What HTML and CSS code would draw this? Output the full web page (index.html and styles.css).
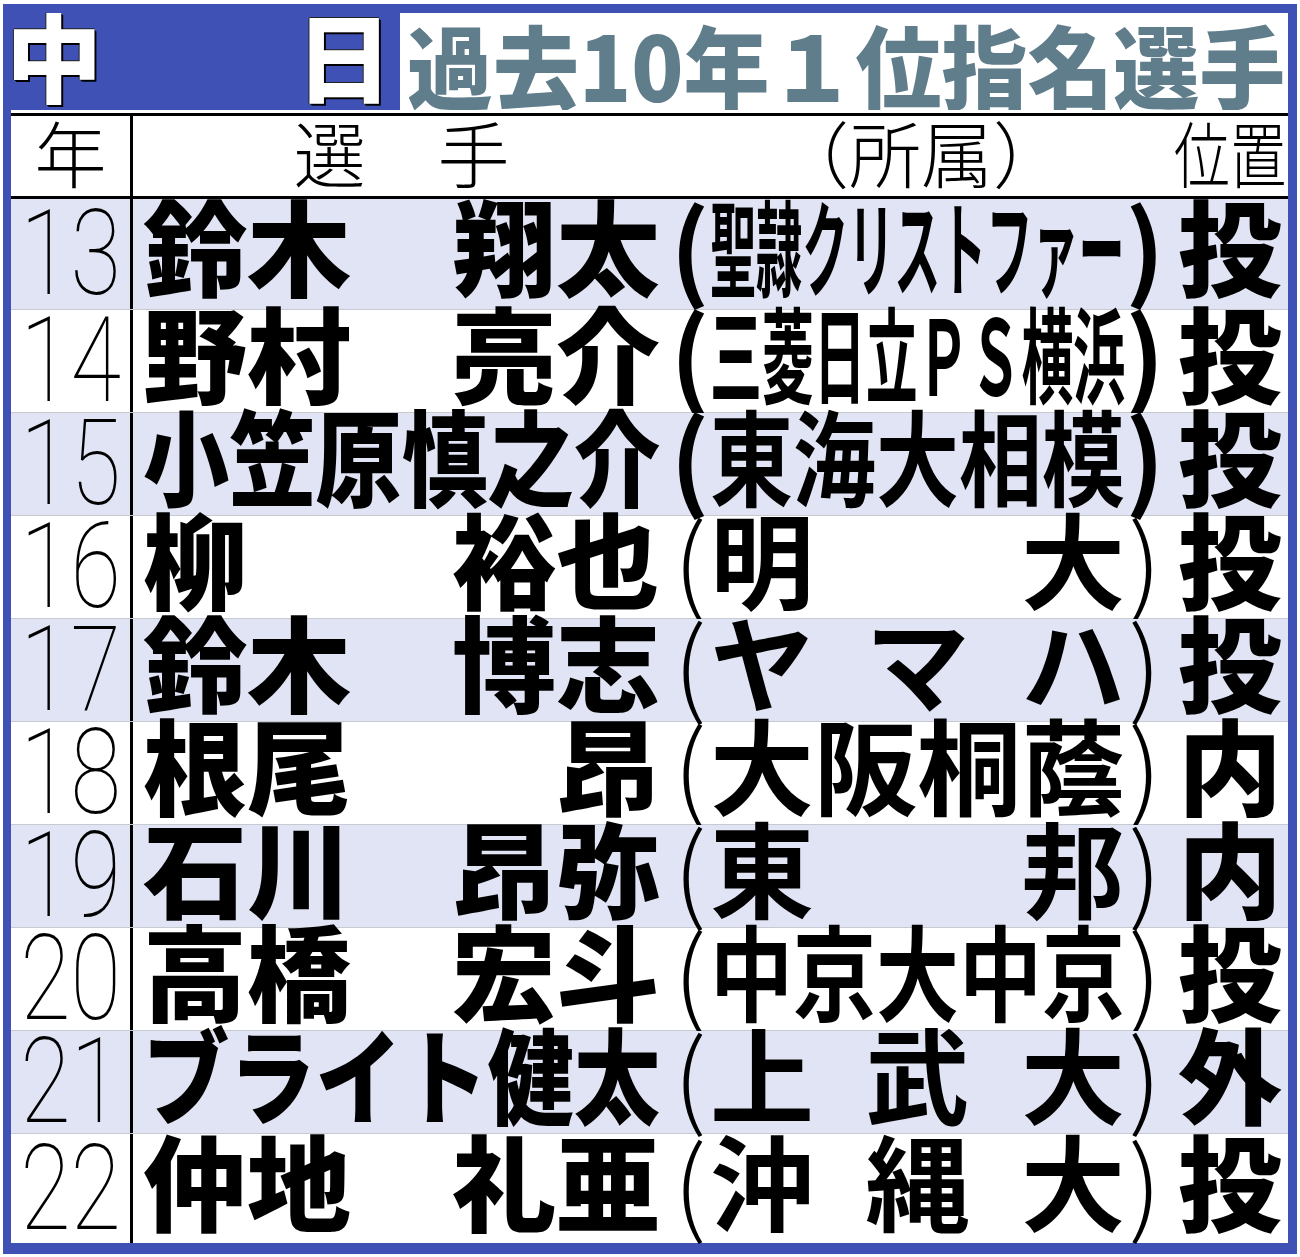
FILE: index.html
```html
<!DOCTYPE html>
<html lang="ja">
<head>
<meta charset="utf-8">
<title>中日 過去10年１位指名選手</title>
<link rel="stylesheet" href="styles.css">
</head>
<body>
<div class="frame">
  <div class="head">
    <div class="team"><span class="team-l">中</span><span>日</span></div>
    <div class="title"><span class="title-text">過去10年１位指名選手</span></div>
  </div>
  <div class="table">
    <div class="hrow">
      <div class="c-year">年</div>
      <div class="c-name">選　手</div>
      <div class="c-aff">（所属）</div>
      <div class="c-pos"><span class="pos-h">位置</span></div>
    </div>
    <div class="rows">
      <div class="row alt">
        <div class="c-year"><span class="num">13</span></div>
        <div class="c-name"><span>鈴木</span><span>翔太</span></div>
        <div class="c-aff"><span class="p bold">(</span><span class="aff-in"><span class="fit fit9">聖隷クリストファー</span></span><span class="p bold">)</span></div>
        <div class="c-pos">投</div>
      </div>
      <div class="row">
        <div class="c-year"><span class="num">14</span></div>
        <div class="c-name"><span>野村</span><span>亮介</span></div>
        <div class="c-aff"><span class="p bold">(</span><span class="aff-in"><span class="fit fit8">三菱日立ＰＳ横浜</span></span><span class="p bold">)</span></div>
        <div class="c-pos">投</div>
      </div>
      <div class="row alt">
        <div class="c-year"><span class="num">15</span></div>
        <div class="c-name"><span class="fit fit6">小笠原慎之介</span></div>
        <div class="c-aff"><span class="p bold">(</span><span class="aff-in"><span class="fit fit5">東海大相模</span></span><span class="p bold">)</span></div>
        <div class="c-pos">投</div>
      </div>
      <div class="row">
        <div class="c-year"><span class="num">16</span></div>
        <div class="c-name"><span>柳</span><span>裕也</span></div>
        <div class="c-aff"><span class="p">(</span><span class="aff-in"><span>明</span><span>大</span></span><span class="p">)</span></div>
        <div class="c-pos">投</div>
      </div>
      <div class="row alt">
        <div class="c-year"><span class="num">17</span></div>
        <div class="c-name"><span>鈴木</span><span>博志</span></div>
        <div class="c-aff"><span class="p">(</span><span class="aff-in"><span>ヤ</span><span>マ</span><span>ハ</span></span><span class="p">)</span></div>
        <div class="c-pos">投</div>
      </div>
      <div class="row">
        <div class="c-year"><span class="num">18</span></div>
        <div class="c-name"><span>根尾</span><span>昂</span></div>
        <div class="c-aff"><span class="p">(</span><span class="aff-in"><span class="fit fit4">大阪桐蔭</span></span><span class="p">)</span></div>
        <div class="c-pos">内</div>
      </div>
      <div class="row alt">
        <div class="c-year"><span class="num">19</span></div>
        <div class="c-name"><span>石川</span><span>昂弥</span></div>
        <div class="c-aff"><span class="p">(</span><span class="aff-in"><span>東</span><span>邦</span></span><span class="p">)</span></div>
        <div class="c-pos">内</div>
      </div>
      <div class="row">
        <div class="c-year"><span class="num">20</span></div>
        <div class="c-name"><span>高橋</span><span>宏斗</span></div>
        <div class="c-aff"><span class="p">(</span><span class="aff-in"><span class="fit fit5">中京大中京</span></span><span class="p">)</span></div>
        <div class="c-pos">投</div>
      </div>
      <div class="row alt">
        <div class="c-year"><span class="num">21</span></div>
        <div class="c-name"><span class="fit fit6">ブライト健太</span></div>
        <div class="c-aff"><span class="p">(</span><span class="aff-in"><span>上</span><span>武</span><span>大</span></span><span class="p">)</span></div>
        <div class="c-pos">外</div>
      </div>
      <div class="row">
        <div class="c-year"><span class="num">22</span></div>
        <div class="c-name"><span>仲地</span><span>礼亜</span></div>
        <div class="c-aff"><span class="p">(</span><span class="aff-in"><span>沖</span><span>縄</span><span>大</span></span><span class="p">)</span></div>
        <div class="c-pos">投</div>
      </div>
    </div>
  </div>
</div>
</body>
</html>
```
FILE: styles.css
```css
body {
  margin: 0;
  background: #fff;
}

.frame {
  margin: 4px 3px 3px 3px;
  width: 1294px;
  height: 1250px;
  box-sizing: border-box;
  border-style: solid;
  border-color: #3f51b5;
  border-width: 9px 9px 11px 8px;
  background: #fff;
  display: flex;
  flex-direction: column;
  font-family: "Noto Sans CJK JP", sans-serif;
}

.head {
  height: 97px;
  display: flex;
  flex: none;
  overflow: hidden;
}

.team {
  width: 389px;
  box-sizing: border-box;
  background: #3f51b5;
  display: flex;
  justify-content: space-between;
  align-items: center;
  padding: 0 8px 16px 0;
  font-size: 96px;
  font-weight: 900;
  line-height: 1;
  color: #fff;
  white-space: nowrap;
  text-shadow: 2px 2px 0 #000, 1px 1px 0 #000, -1px 0 0 #222, 0 -1px 0 #222;
}

.team-l {
  margin-left: -5px;
}

.title {
  flex: 1;
  display: flex;
  align-items: center;
  padding: 2px 0 0 7px;
  overflow: hidden;
  font-size: 90px;
  font-weight: 900;
  line-height: 1;
  color: #607d8b;
}

.title-text {
  display: inline-block;
  white-space: nowrap;
  transform: scaleX(0.955);
  transform-origin: left center;
}

.table {
  margin-top: 3px;
  border-top: 3px solid #000;
  flex: 1;
  display: flex;
  flex-direction: column;
}

.hrow,
.row {
  display: grid;
  grid-template-columns: 122px 537px 502px 116px;
  grid-template-rows: 100%;
  box-sizing: border-box;
  flex: none;
}

.hrow {
  height: 83px;
  border-bottom: 3px solid #000;
  font-size: 72px;
  line-height: 1;
  white-space: nowrap;
}

.hrow > div {
  display: flex;
  align-items: center;
  justify-content: center;
  padding: 0 0 10px 0;
  box-sizing: border-box;
  overflow: hidden;
  font-weight: 300;
}

.c-year {
  border-right: 3px solid #000;
  display: flex;
  align-items: center;
  justify-content: center;
}

.pos-h {
  display: inline-block;
  transform: scaleX(0.78);
}

.rows {
  display: flex;
  flex-direction: column;
}

.row {
  height: 103px;
  border-bottom: 1px solid #c8cad2;
  font-size: 104px;
  line-height: 1;
  white-space: nowrap;
}

.row:first-child {
  height: 111px;
}

.row:last-child {
  height: 109px;
  border-bottom: 0;
}

.row > div {
  box-sizing: border-box;
  padding-bottom: 20px;
}

.row > .c-year {
  padding-bottom: 0;
}

.alt {
  background: #e1e4f4;
}

.num {
  display: inline-block;
  font-family: Roboto, sans-serif;
  font-weight: 100;
  font-size: 118px;
  line-height: 1;
  transform: scaleX(0.78);
}

.c-name {
  display: flex;
  align-items: center;
  justify-content: space-between;
  padding-left: 10px;
  padding-right: 10px;
  font-weight: 900;
}

.c-aff {
  display: flex;
  align-items: center;
  font-weight: 700;
}

.p {
  width: 40px;
  flex: none;
  display: flex;
  justify-content: center;
  font-weight: 300;
}

.p.bold {
  font-weight: 700;
}

.aff-in {
  width: 415px;
  flex: none;
  display: flex;
  justify-content: space-between;
}

.fit {
  display: inline-block;
  transform-origin: left center;
}

.fit9 { transform: scaleX(0.443); }
.fit8 { transform: scaleX(0.499); }
.fit6 { transform: scaleX(0.829); }
.fit5 { transform: scaleX(0.798); }
.fit4 { transform: scaleX(0.998); }

.c-pos {
  display: flex;
  align-items: center;
  justify-content: center;
  font-weight: 900;
}
```
